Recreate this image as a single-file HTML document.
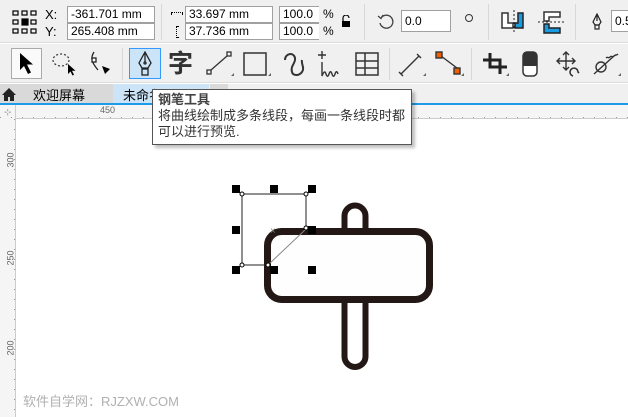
<!DOCTYPE html>
<html><head><meta charset="utf-8"><style>
*{margin:0;padding:0;box-sizing:border-box}
body{width:628px;height:417px;overflow:hidden;background:#fff;font-family:"Liberation Sans","Noto Sans CJK SC",sans-serif;position:relative;font-size:12px;color:#000}
.a{position:absolute}
.inp{position:absolute;background:#fff;border:1px solid #a0a0a0;font-size:12px;line-height:14px;padding-left:3px;height:17px}
.sep{position:absolute;width:1px;background:#d8d8d8}
</style></head><body>
<!-- toolbar 1 -->
<div class="a" style="left:0;top:0;width:628px;height:43px;background:#f0f0f0;border-bottom:1px solid #dcdcdc"></div>
<svg class="a" style="left:12px;top:10px" width="25" height="24" viewBox="0 0 25 24" fill="none" stroke="#000" stroke-width="1.2">
<rect x="1" y="1" width="5" height="4"/><rect x="10" y="1" width="5" height="4"/><rect x="19" y="1" width="5" height="4"/>
<rect x="1" y="10" width="5" height="4"/><rect x="10" y="9" width="6" height="6" fill="#000"/><rect x="19" y="10" width="5" height="4"/>
<rect x="1" y="19" width="5" height="4"/><rect x="10" y="19" width="5" height="4"/><rect x="19" y="19" width="5" height="4"/></svg>
<div class="a" style="left:45px;top:7px;font-size:13px">X:</div>
<div class="a" style="left:45px;top:24px;font-size:13px">Y:</div>
<div class="inp" style="left:67px;top:6px;width:88px">-361.701 mm</div>
<div class="inp" style="left:67px;top:23px;width:88px">265.408 mm</div>
<div class="sep" style="left:161px;top:4px;height:36px"></div>
<div class="a" style="left:171px;top:12px;width:12px;height:3px;border-left:1px solid #000;border-right:1px solid #000;border-top:1px dotted #000"></div>
<div class="a" style="left:176px;top:26px;width:3px;height:12px;border-top:1px solid #000;border-bottom:1px solid #000;border-left:1px dotted #000"></div>
<div class="inp" style="left:185px;top:6px;width:88px">33.697 mm</div>
<div class="inp" style="left:185px;top:23px;width:88px">37.736 mm</div>
<div class="inp" style="left:279px;top:6px;width:40px;border-right:none">100.0</div>
<div class="inp" style="left:279px;top:23px;width:40px;border-right:none">100.0</div>
<div class="a" style="left:323px;top:7px;font-size:12px">%</div>
<div class="a" style="left:323px;top:24px;font-size:12px">%</div>
<svg class="a" style="left:341px;top:15px" width="10" height="12"><path d="M2 6V3a3 3 0 0 1 6 0" stroke="#000" fill="none" stroke-width="1.2"/><rect x="1" y="6" width="8" height="6" fill="#000"/></svg>
<div class="sep" style="left:364px;top:4px;height:36px"></div>
<svg class="a" style="left:377px;top:12px" width="18" height="18" fill="none" stroke="#444" stroke-width="1.3"><path d="M4 6A6.5 6.5 0 1 1 3 11"/><path d="M1 4l3 2.5 2-3.5"/></svg>
<div class="inp" style="left:401px;top:10px;width:50px;height:22px;line-height:20px">0.0</div>
<div class="a" style="left:465px;top:14px;width:8px;height:8px;border:1px solid #333;border-radius:50%"></div>
<div class="sep" style="left:488px;top:4px;height:36px"></div>
<svg class="a" style="left:500px;top:9px" width="28" height="25"><path d="M2 4h6v10h5v5H2z" fill="#fff" stroke="#333" stroke-width="1.5"/><path d="M18 4h5v15H15v-5h3z" fill="#1a9be0" stroke="#222" stroke-width="1.5"/><path d="M14 1v24" stroke="#222" stroke-dasharray="2 2"/></svg>
<svg class="a" style="left:537px;top:9px" width="30" height="25"><path d="M7 3h16v5h-11v4H7z" fill="#fff" stroke="#333" stroke-width="1.5"/><path d="M7 15h5v4h11v5H7z" fill="#1a9be0" stroke="#222" stroke-width="1.5"/><path d="M1 13h28" stroke="#222" stroke-dasharray="2 2"/></svg>
<div class="sep" style="left:575px;top:4px;height:36px"></div>
<svg class="a" style="left:592px;top:13px" width="10" height="17" fill="none" stroke="#222" stroke-width="1.2"><path d="M5 1L1 9l2 3h4l2-3z M5 1v7"/><rect x="3" y="12" width="4" height="4"/></svg>
<div class="inp" style="left:611px;top:10px;width:20px;height:22px;line-height:20px">0.5</div>
<!-- toolbar 2 -->
<div class="a" style="left:0;top:44px;width:628px;height:39px;background:#f0f0f0;border-bottom:1px solid #dcdcdc"></div>
<div class="a" style="left:11px;top:48px;width:31px;height:31px;border:1px solid #aaa;background:#fafafa"></div>
<svg class="a" style="left:17px;top:52px" width="20" height="24"><path d="M3 1v17l4-4 4 8 3-1.5-4-8h6z" fill="#000"/></svg>
<svg class="a" style="left:50px;top:50px" width="30" height="28" fill="none" stroke="#333" stroke-width="1.2"><ellipse cx="11" cy="10" rx="8" ry="6" stroke-dasharray="2 2"/><path d="M18 14v10l2.5-2.5 2 4 1.5-.8-2-4h3.5z" fill="#000" stroke="none"/></svg>
<svg class="a" style="left:88px;top:50px" width="28" height="28" fill="none" stroke="#222" stroke-width="1.3"><path d="M6 2c-4 6-2 11 4 18"/><rect x="4" y="8" width="4" height="4" fill="#fff"/><path d="M14 16l8 3-5 5z" fill="#000" stroke="none"/></svg>
<div class="sep" style="left:122px;top:48px;height:32px"></div>
<div class="a" style="left:129px;top:48px;width:32px;height:31px;border:1px solid #3399ff;background:#cce4f7"></div>
<svg class="a" style="left:137px;top:51px" width="16" height="26" fill="none" stroke="#222" stroke-width="1.3"><path d="M8 1L2 12l3 5h6l3-5z M8 1v10"/><circle cx="8" cy="12" r="1"/><rect x="5" y="18" width="6" height="6"/></svg>
<div class="a" style="left:168px;top:48px;font-size:25px;font-weight:bold;color:#333;line-height:32px">字</div>
<svg class="a" style="left:205px;top:50px" width="30" height="30" fill="none" stroke="#333" stroke-width="1.3"><rect x="2" y="20" width="4" height="4"/><rect x="22" y="2" width="4" height="4"/><path d="M6 20L22 6"/><path d="M26 26l3-3v3z" fill="#666" stroke="none"/></svg>
<svg class="a" style="left:242px;top:50px" width="30" height="30" fill="none" stroke="#333" stroke-width="1.5"><rect x="2" y="3" width="22" height="22"/><path d="M26 26l3-3v3z" fill="#666" stroke="none"/></svg>
<svg class="a" style="left:280px;top:50px" width="28" height="30" fill="none" stroke="#333" stroke-width="2"><path d="M5 10c0-7 9-8 10-2 1 5-5 8-3 14 1 4 7 4 10 0 3-4-1-8 0-12"/></svg>
<svg class="a" style="left:317px;top:50px" width="28" height="30" fill="none" stroke="#333" stroke-width="1.4"><path d="M5 1v8M1 5h8"/><path d="M5 12v14c2-5 3-5 4-2s2 3 3 0 2-3 3 0 2 3 3 0 2-3 3 0"/></svg>
<svg class="a" style="left:354px;top:50px" width="26" height="28" fill="none" stroke="#333" stroke-width="1.5"><rect x="2" y="3" width="22" height="22"/><path d="M2 11h22M2 18h22M11 3v22"/></svg>
<div class="sep" style="left:389px;top:48px;height:32px"></div>
<svg class="a" style="left:397px;top:50px" width="30" height="30" fill="none" stroke="#333" stroke-width="1.4"><path d="M4 24L22 6M2 22l4 4M20 4l4 4"/><path d="M26 26l3-3v3z" fill="#666" stroke="none"/></svg>
<svg class="a" style="left:435px;top:50px" width="30" height="30" stroke="#333" stroke-width="1.4"><path d="M6 6L22 18"/><rect x="1" y="2" width="6" height="6" fill="#f06000"/><rect x="19" y="18" width="6" height="6" fill="#f06000"/><path d="M26 26l3-3v3z" fill="#666" stroke="none"/></svg>
<div class="sep" style="left:471px;top:48px;height:32px"></div>
<svg class="a" style="left:480px;top:50px" width="30" height="30" fill="none" stroke="#222" stroke-width="3"><path d="M3 10h17v14M10 3v14h17"/><path d="M26 26l3-3v3z" fill="#666" stroke="none"/></svg>
<svg class="a" style="left:521px;top:50px" width="18" height="28"><rect x="2" y="2" width="14" height="24" rx="4" fill="#fff" stroke="#333" stroke-width="1.5"/><path d="M2 6a4 4 0 0 1 4-4h6a4 4 0 0 1 4 4v10H2z" fill="#333"/></svg>
<svg class="a" style="left:555px;top:50px" width="28" height="28" fill="none" stroke="#333" stroke-width="1.4"><path d="M11 2v18M2 11h18M8 5l3-3 3 3M8 17l3 3 3-3M5 8l-3 3 3 3M17 8l3 3-3 3"/><path d="M18 26a4 4 0 1 1 5-4l1 1" stroke-width="1.6"/></svg>
<svg class="a" style="left:592px;top:50px" width="30" height="30" fill="none" stroke="#333" stroke-width="1.4"><circle cx="9" cy="17" r="5"/><path d="M2 24L22 6"/><path d="M14 8c2-2 2 1 4-1s2 1 4-1 2 0 4-2"/><path d="M26 26l3-3v3z" fill="#666" stroke="none"/></svg>
<!-- tabs -->
<div class="a" style="left:0;top:84px;width:628px;height:19px;background:#f0f0f0"></div>
<div class="a" style="left:0;top:84px;width:113px;height:19px;background:#d9d9d9"></div>
<svg class="a" style="left:1px;top:87px" width="16" height="14"><path d="M8 1L1 8h2v6h4v-4h2v4h4V8h2z" fill="#222"/></svg>
<div class="a" style="left:33px;top:85px;font-size:13px">欢迎屏幕</div>
<div class="a" style="left:113px;top:84px;width:96px;height:19px;background:#cce4f7"></div>
<div class="a" style="left:123px;top:85px;font-size:13px">未命名</div>
<div class="a" style="left:210px;top:84px;width:18px;height:19px;background:#dadada"></div>
<div class="a" style="left:0;top:103px;width:628px;height:2px;background:#1e9be8"></div>
<!-- rulers -->
<div class="a" style="left:0;top:105px;width:628px;height:14px;background:#f5f5f5;border-bottom:1px solid #ccc"></div>
<div class="a" style="left:0;top:105px;width:16px;height:312px;background:#f5f5f5;border-right:1px solid #ccc"></div>
<div class="a" style="left:100px;top:105px;font-size:9px;color:#666">450</div>
<div class="a" style="left:4px;top:107px;font-size:9px;color:#888">⊹</div>
<div class="a" style="left:0;top:117px;width:628px;height:1px;background:repeating-linear-gradient(90deg,#999 0 1px,transparent 1px 11px)"></div>
<div class="a" style="left:14px;top:119px;width:1px;height:298px;background:repeating-linear-gradient(180deg,#999 0 1px,transparent 1px 10px)"></div>
<div class="a" style="left:3px;top:155px;font-size:9px;color:#666;transform:rotate(-90deg)">300</div>
<div class="a" style="left:3px;top:253px;font-size:9px;color:#666;transform:rotate(-90deg)">250</div>
<div class="a" style="left:3px;top:343px;font-size:9px;color:#666;transform:rotate(-90deg)">200</div>
<!-- drawing -->
<svg class="a" style="left:0;top:0" width="628" height="417">
<rect x="344.5" y="205.5" width="21" height="80" rx="10.5" fill="#fff" stroke="#231815" stroke-width="6"/>
<rect x="344.5" y="260" width="21" height="107" rx="10.5" fill="#fff" stroke="#231815" stroke-width="6"/>
<rect x="267.5" y="231.5" width="162" height="68" rx="14" fill="#fefefe" stroke="#231815" stroke-width="7"/>
<path d="M242 194h64v36M242 194v71h26" fill="none" stroke="#222" stroke-width="1"/>
<path d="M268 265L306 229" stroke="#888" stroke-width="1"/>
<g fill="#fff" stroke="#000"><circle cx="242" cy="194" r="2"/><circle cx="306" cy="194" r="2"/><circle cx="242" cy="265" r="2"/><circle cx="268" cy="265" r="2"/><circle cx="306" cy="228" r="2"/></g>
<text x="270" y="234" font-size="10" fill="#777" font-family="Liberation Sans">×</text>
<g fill="#000"><rect x="232" y="185" width="8" height="8"/><rect x="270" y="185" width="8" height="8"/><rect x="308" y="185" width="8" height="8"/><rect x="232" y="226" width="8" height="8"/><rect x="308" y="226" width="8" height="8"/><rect x="232" y="266" width="8" height="8"/><rect x="270" y="266" width="8" height="8"/><rect x="308" y="266" width="8" height="8"/></g>
</svg>
<!-- tooltip -->
<div class="a" style="left:152px;top:89px;width:260px;height:56px;background:#fff;border:1px solid #555;box-shadow:3px 3px 3px rgba(0,0,0,.25);padding:2px 5px;font-size:13px;line-height:16px;color:#333;white-space:nowrap">
<div style="font-weight:bold;color:#444">钢笔工具</div>
<div>将曲线绘制成多条线段，每画一条线段时都</div>
<div>可以进行预览.</div></div>
<div class="a" style="left:23px;top:391px;font-size:13px;color:#b0b0b0">软件自学网：RJZXW.COM</div>
</body></html>
